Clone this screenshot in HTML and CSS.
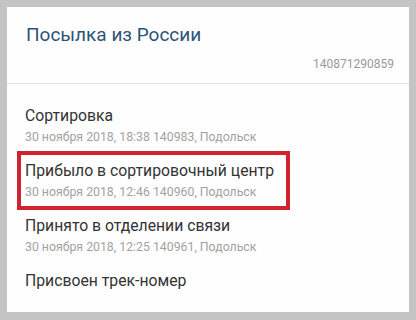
FILE: index.html
```html
<!DOCTYPE html>
<html lang="ru">
<head>
<meta charset="utf-8">
<link rel="stylesheet" href="styles.css">
</head>
<body>
<div class="frame">
  <div class="panel">
    <div class="header">
      <div class="title">Посылка из России</div>
      <div class="track">140871290859</div>
    </div>
    <div class="list">
      <div class="item">
        <div class="item-title">Сортировка</div>
        <div class="item-sub">30 ноября 2018, 18:38 140983, Подольск</div>
      </div>
      <div class="item highlight">
        <div class="item-title">Прибыло в сортировочный центр</div>
        <div class="item-sub">30 ноября 2018, 12:46 140960, Подольск</div>
      </div>
      <div class="item">
        <div class="item-title">Принято в отделении связи</div>
        <div class="item-sub">30 ноября 2018, 12:25 140961, Подольск</div>
      </div>
      <div class="item">
        <div class="item-title">Присвоен трек-номер</div>
      </div>
    </div>
  </div>
</div>
</body>
</html>
```
FILE: styles.css
```css
html, body {
  margin: 0;
  padding: 0;
  background: #c4c4c4;
  font-family: Roboto, "Noto Sans", sans-serif;
}
.frame {
  width: 416px;
  height: 320px;
  padding: 7px 7px 8px 7px;
  box-sizing: border-box;
}
.panel {
  background: #fefefe;
  width: 402px;
  height: 305px;
  overflow: hidden;
}
.header {
  padding: 16px 15px 11px 19px;
  border-bottom: 1px solid #e2e2e2;
}
.title {
  font-size: 19px;
  line-height: 24px;
  color: #2c5478;
}
.track {
  margin-top: 9px;
  font-size: 12px;
  line-height: 16px;
  color: #9a9a9a;
  text-align: right;
}
.list {
  display: flex;
  flex-direction: column;
  align-items: flex-start;
  gap: 16px;
  padding: 22px 18px 0 18px;
}
.item-title {
  font-size: 15.75px;
  line-height: 20px;
  color: #333333;
}
.item-sub {
  margin-top: 3px;
  font-size: 12.3px;
  line-height: 16px;
  color: #a2a2a2;
}
.highlight {
  border: 4px solid #d0222f;
  padding: 6px 12px 6px 4px;
  margin: -10px 0 -10px -8px;
}
```
